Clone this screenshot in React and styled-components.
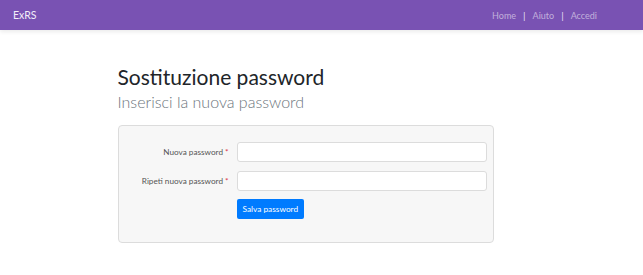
import React from "react";
import styled, { createGlobalStyle } from "styled-components";

const GlobalStyle = createGlobalStyle`
  body {
    margin: 0;
    background: #fff;
    font-family: Lato, "Open Sans", sans-serif;
    color: #212529;
  }
`;

const NavBar = styled.nav`
  height: 30px;
  background-color: #7952b3;
  display: flex;
  align-items: center;
  justify-content: space-between;
  padding: 0 46px 0 13px;
  box-shadow: 0 2px 4px rgba(0, 0, 0, 0.08);
`;

const Brand = styled.a`
  color: #f3eefa;
  font-size: 10.5px;
  text-decoration: none;
`;

const NavLinks = styled.div`
  display: flex;
  align-items: center;
  gap: 7px;
`;

const NavLink = styled.a`
  color: rgba(255, 255, 255, 0.55);
  font-size: 9px;
  text-decoration: none;
`;

const Divider = styled.span`
  color: rgba(255, 255, 255, 0.85);
  font-size: 10px;
`;

const Container = styled.main`
  width: 408px;
  margin: 0 auto;
  padding-top: 34px;
`;

const Title = styled.h1`
  margin: 0;
  font-size: 21px;
  font-weight: 400;
  line-height: 26px;
  color: #212529;
`;

const Subtitle = styled.h2`
  margin: 0 0 11px;
  font-size: 16px;
  font-weight: 300;
  line-height: 24px;
  color: #6c757d;
`;

const Card = styled.form`
  width: 376px;
  box-sizing: border-box;
  background: #f7f7f7;
  border: 1px solid #dcdcdc;
  border-radius: 4px;
  padding: 16px 7px 23px 0;
  display: grid;
  grid-template-columns: 110px 250px;
  column-gap: 8px;
  row-gap: 9px;
  align-items: center;
`;

const Label = styled.label`
  text-align: right;
  font-size: 8.2px;
  color: #555;
`;

const Required = styled.span`
  color: #dc3545;
  margin-left: 2px;
`;

const Input = styled.input`
  box-sizing: border-box;
  height: 20px;
  width: 100%;
  border: 1px solid #dcdcdc;
  border-radius: 3px;
  background: #fff;
  outline: none;
`;

const Button = styled.button`
  grid-column: 2;
  justify-self: start;
  height: 20px;
  padding: 0 6px;
  border: none;
  border-radius: 2px;
  background: #007bff;
  color: #fff;
  font-family: inherit;
  font-size: 8.3px;
  margin-top: -1px;
`;

export default function App() {
  return (
    <>
      <GlobalStyle />
      <NavBar>
        <Brand href="#">ExRS</Brand>
        <NavLinks>
          <NavLink href="#">Home</NavLink>
          <Divider>|</Divider>
          <NavLink href="#">Aiuto</NavLink>
          <Divider>|</Divider>
          <NavLink href="#">Accedi</NavLink>
        </NavLinks>
      </NavBar>
      <Container>
        <Title>Sostituzione password</Title>
        <Subtitle>Inserisci la nuova password</Subtitle>
        <Card onSubmit={(e) => e.preventDefault()}>
          <Label htmlFor="pw1">
            Nuova password<Required>*</Required>
          </Label>
          <Input id="pw1" type="password" />
          <Label htmlFor="pw2">
            Ripeti nuova password<Required>*</Required>
          </Label>
          <Input id="pw2" type="password" />
          <Button type="submit">Salva password</Button>
        </Card>
      </Container>
    </>
  );
}
